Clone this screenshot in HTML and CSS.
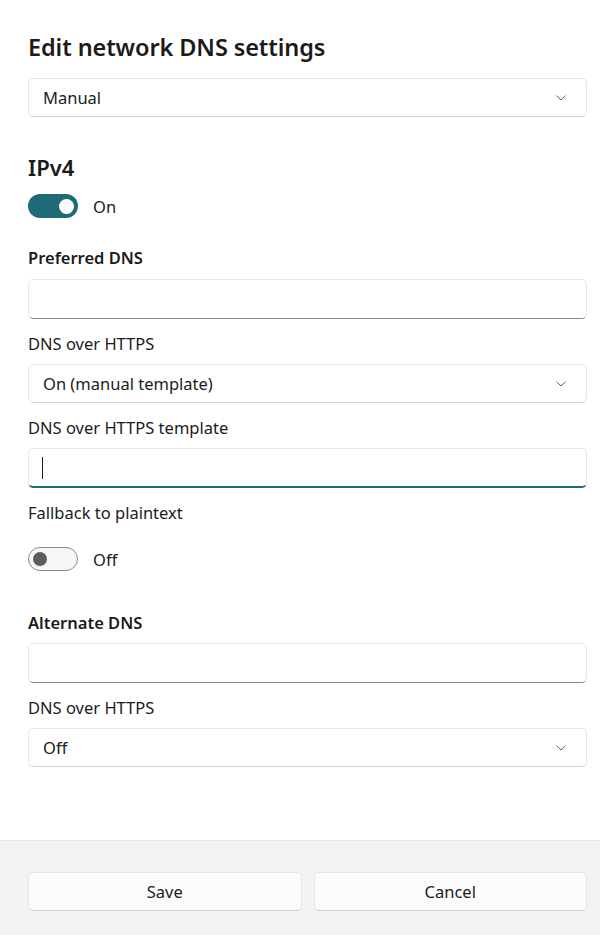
FILE: index.html
```html
<!DOCTYPE html>
<html lang="en">
<head>
<meta charset="utf-8">
<title>Edit network DNS settings</title>
<link rel="stylesheet" href="styles.css">
</head>
<body>
<div class="dialog">
  <main class="content">
    <h1 class="title">Edit network DNS settings</h1>
    <div class="combo combo-first">
      <span class="combo-text">Manual</span>
      <svg class="chevron" width="10" height="6" viewBox="0 0 10 6"><path d="M0.5 0.7 L5 5 L9.5 0.7" fill="none" stroke="#5f5f5f" stroke-width="1"/></svg>
    </div>

    <h2 class="subtitle">IPv4</h2>
    <div class="toggle-row toggle-row-on">
      <span class="toggle toggle-on"><span class="knob"></span></span>
      <span class="toggle-label">On</span>
    </div>

    <div class="label label-strong label-first">Preferred DNS</div>
    <div class="textbox"></div>

    <div class="label">DNS over HTTPS</div>
    <div class="combo">
      <span class="combo-text">On (manual template)</span>
      <svg class="chevron" width="10" height="6" viewBox="0 0 10 6"><path d="M0.5 0.7 L5 5 L9.5 0.7" fill="none" stroke="#5f5f5f" stroke-width="1"/></svg>
    </div>

    <div class="label">DNS over HTTPS template</div>
    <div class="textbox textbox-focus"><span class="caret"></span></div>

    <div class="label">Fallback to plaintext</div>
    <div class="toggle-row toggle-row-off">
      <span class="toggle toggle-off"><span class="knob"></span></span>
      <span class="toggle-label">Off</span>
    </div>

    <div class="label label-strong label-alt">Alternate DNS</div>
    <div class="textbox"></div>

    <div class="label">DNS over HTTPS</div>
    <div class="combo">
      <span class="combo-text">Off</span>
      <svg class="chevron" width="10" height="6" viewBox="0 0 10 6"><path d="M0.5 0.7 L5 5 L9.5 0.7" fill="none" stroke="#5f5f5f" stroke-width="1"/></svg>
    </div>
  </main>
  <footer class="footer">
    <button class="btn" type="button">Save</button>
    <button class="btn" type="button">Cancel</button>
  </footer>
</div>
</body>
</html>
```

FILE: styles.css
```css
* { box-sizing: border-box; }

html, body {
  margin: 0;
  padding: 0;
  background: #ffffff;
}

body {
  font-family: "Noto Sans", "Open Sans", sans-serif;
  font-size: 16.5px;
  color: #1b1b1b;
}

.dialog {
  width: 600px;
  height: 935px;
  display: flex;
  flex-direction: column;
}

.content {
  flex: 1;
  padding: 31px 13px 0 28px;
  display: flex;
  flex-direction: column;
}

.title {
  margin: 0;
  font-size: 23.5px;
  font-weight: 600;
  line-height: 32px;
  height: 32px;
  letter-spacing: -0.1px;
}

.combo {
  height: 39px;
  margin-top: 9px;
  border: 1px solid #e8e8e8;
  border-bottom-color: #d2d2d2;
  border-radius: 5px;
  background: #ffffff;
  display: flex;
  align-items: center;
  justify-content: space-between;
  padding: 0 20px 0 14px;
}

.combo-first { margin-top: 15px; }

.combo-text {
  font-size: 16.5px;
  line-height: 24px;
}

.chevron { display: block; }

.subtitle {
  margin: 35px 0 0;
  font-size: 22px;
  font-weight: 600;
  line-height: 30px;
  height: 32px;
}

.toggle-row {
  display: flex;
  align-items: center;
  height: 24px;
  gap: 15px;
}

.toggle-row-on { margin-top: 10px; }
.toggle-row-off { margin-top: 23px; }

.toggle {
  width: 50px;
  height: 24px;
  border-radius: 12px;
  display: flex;
  align-items: center;
  flex-shrink: 0;
}

.toggle-on {
  background: #1f6a77;
  justify-content: flex-end;
  padding-right: 4px;
}

.toggle-on .knob {
  width: 15px;
  height: 15px;
  border-radius: 50%;
  background: #ffffff;
}

.toggle-off {
  background: #f6f6f6;
  border: 1px solid #8b8b8b;
  padding-left: 4px;
}

.toggle-off .knob {
  width: 14px;
  height: 14px;
  border-radius: 50%;
  background: #5c5c5c;
}

.toggle-label {
  font-size: 16.5px;
  line-height: 24px;
  padding-top: 2px;
}

.label {
  font-size: 16.5px;
  line-height: 26px;
  height: 24px;
  margin-top: 11px;
}

.label-strong { font-weight: 600; }
.label-first { margin-top: 27px; }
.label-alt { margin-top: 39px; }

.combo + .label,
.textbox + .label { margin-top: 12px; }

.textbox {
  height: 40px;
  margin-top: 10px;
  border: 1px solid #e8e8e8;
  border-bottom-color: #8a8a8a;
  border-radius: 5px;
  background: #ffffff;
  display: flex;
  align-items: center;
  padding: 0 13px;
}

.label + .textbox { margin-top: 9px; }
.label-first + .textbox { margin-top: 10px; }

.textbox-focus {
  border-bottom: 2px solid #1e6b78;
}

.caret {
  width: 1px;
  height: 22px;
  background: #1b1b1b;
  margin-top: 1px;
}

.footer {
  height: 95px;
  flex-shrink: 0;
  background: #f3f3f3;
  border-top: 1px solid #e5e5e5;
  padding: 31px 13px 0 28px;
  display: flex;
  gap: 12px;
  align-items: flex-start;
}

.btn {
  flex: 1;
  height: 39px;
  font-family: "Noto Sans", "Open Sans", sans-serif;
  font-size: 16.5px;
  color: #1b1b1b;
  background: #fbfbfb;
  border: 1px solid #e5e5e5;
  border-bottom-color: #cfcfcf;
  border-radius: 5px;
  padding: 0;
}
```
